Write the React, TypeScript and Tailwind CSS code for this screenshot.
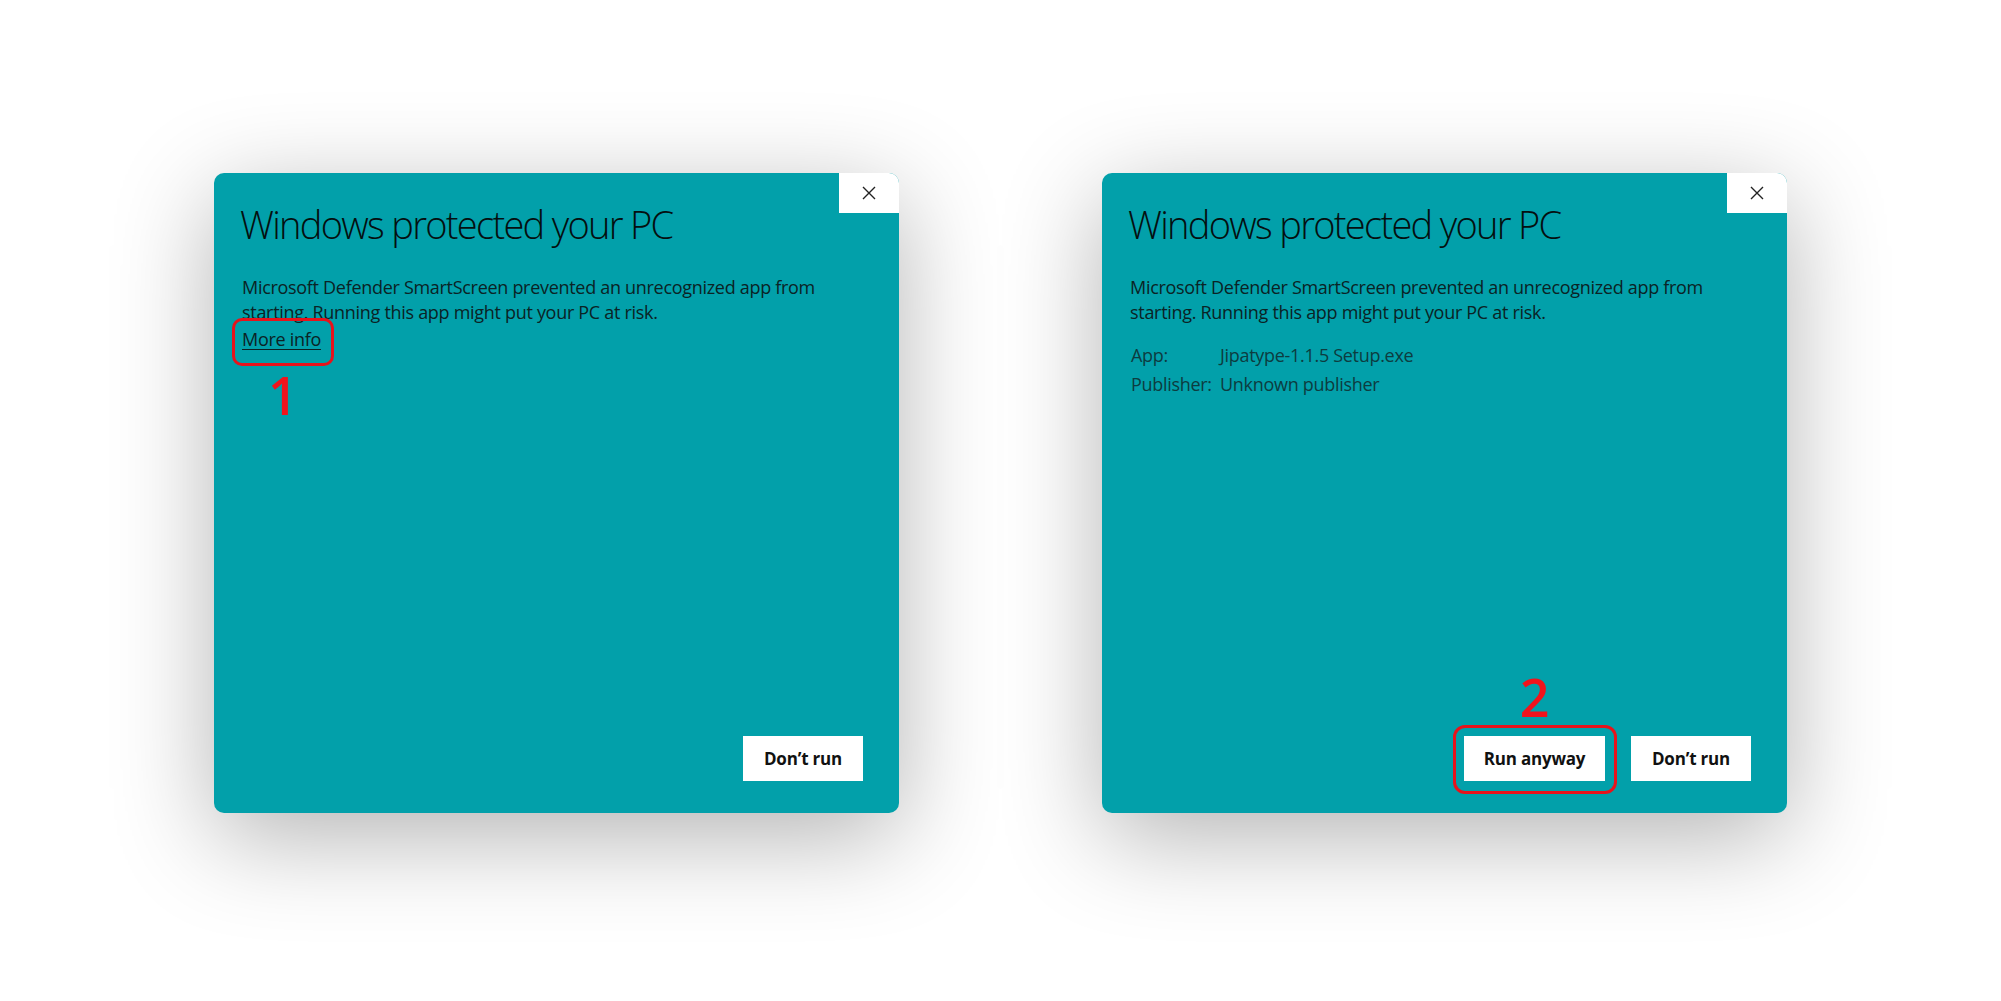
import type { ReactNode } from 'react';

const fontStack = { fontFamily: '"Open Sans", "Noto Sans", "Liberation Sans", sans-serif' };

function CloseButton() {
  return (
    <button
      type="button"
      className="w-[60px] h-[40px] bg-white rounded-tr-[10px] flex items-center justify-center shrink-0"
    >
      <svg width="14" height="14" viewBox="0 0 14 14" fill="none">
        <path d="M1 1L13 13M13 1L1 13" stroke="#222" strokeWidth="1.4" />
      </svg>
    </button>
  );
}

function Dialog({ children, buttons }: { children: ReactNode; buttons: ReactNode }) {
  return (
    <div
      className="w-[685px] h-[640px] bg-[#02a0aa] rounded-[10px] flex flex-col shadow-[0_24px_100px_rgba(0,0,0,0.3)]"
    >
      <div className="flex justify-between items-start">
        <h1 className="pl-[26px] pt-[25px] text-[38px] leading-[52px] font-light text-[#050f10] tracking-[-1.7px]">
          Windows protected your PC
        </h1>
        <CloseButton />
      </div>
      <div className="pl-[28px] pr-[40px] pt-[25px] flex flex-col">{children}</div>
      <div className="mt-auto flex justify-end gap-[26px] pr-[36px] pb-[32px]">{buttons}</div>
    </div>
  );
}

function Message() {
  return (
    <p className="text-[18px] leading-[24.5px] text-[#0b2325] tracking-[-0.3px]">
      Microsoft Defender SmartScreen prevented an unrecognized app from
      <br />
      starting. Running this app might put your PC at risk.
    </p>
  );
}

function WhiteButton({ label, width }: { label: string; width: string }) {
  return (
    <button
      type="button"
      className={`${width} h-[45px] bg-white text-[17px] font-bold text-[#111] tracking-[-0.2px]`}
    >
      {label}
    </button>
  );
}

export default function App() {
  return (
    <div className="min-h-screen bg-white flex justify-center items-start gap-[203px] pt-[173px]" style={fontStack}>
      <Dialog buttons={<WhiteButton label="Don’t run" width="w-[120px]" />}>
        <Message />
        <div className="relative self-start mt-[3px]">
          <a className="text-[18px] leading-[24px] underline underline-offset-[3px] text-[#0b2325] tracking-[-0.3px]">
            More info
          </a>
          <div className="absolute -left-[10px] -top-[9px] w-[102px] h-[48px] border-[3px] border-[#e8131b] rounded-[10px]" />
          <div className="absolute left-[26px] top-[38px] text-[#f0141c] text-[52px] leading-[60px] font-semibold">1</div>
        </div>
      </Dialog>

      <Dialog
        buttons={
          <>
            <div className="relative">
              <WhiteButton label="Run anyway" width="w-[141px]" />
              <div className="absolute -left-[11px] -top-[11px] -right-[12px] -bottom-[13px] border-[3px] border-[#e8131b] rounded-[12px]" />
              <div className="absolute left-0 right-0 -top-[69px] text-center text-[#f0141c] text-[52px] leading-[60px] font-semibold">
                2
              </div>
            </div>
            <WhiteButton label="Don’t run" width="w-[120px]" />
          </>
        }
      >
        <Message />
        <div className="grid grid-cols-[89px_1fr] mt-[17px] text-[18px] leading-[29px] text-[#0d3c40] tracking-[-0.3px] pl-[1px]">
          <span>App:</span>
          <span>Jipatype-1.1.5 Setup.exe</span>
          <span>Publisher:</span>
          <span>Unknown publisher</span>
        </div>
      </Dialog>
    </div>
  );
}
